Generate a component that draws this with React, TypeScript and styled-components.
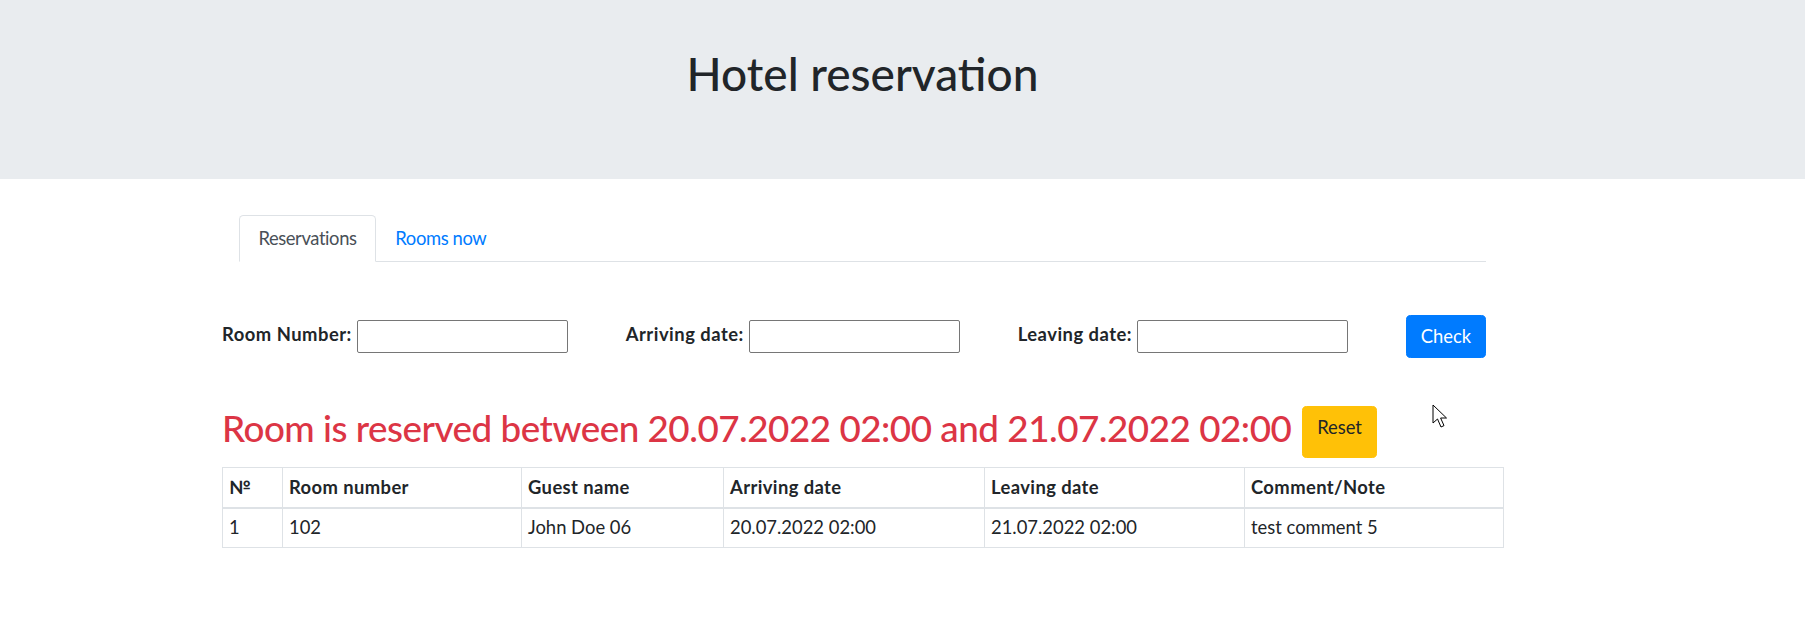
import React from "react";
import styled, { createGlobalStyle } from "styled-components";

const GlobalStyle = createGlobalStyle`
  html, body {
    margin: 0;
    padding: 0;
    background: #ffffff;
  }
  body {
    font-family: Lato, "Open Sans", "Noto Sans", sans-serif;
    font-size: 18.4px;
    line-height: 1.5;
    color: #212529;
  }
  *, *::before, *::after {
    box-sizing: border-box;
  }
`;

const Page = styled.div`
  position: relative;
  min-height: 624px;
`;

const Jumbotron = styled.header`
  background: #e9ecef;
  height: 179px;
  padding-top: 45.5px;
`;

const Container = styled.div`
  width: 1281px;
  margin-left: 222px;
`;

const Title = styled.h1`
  margin: 0;
  text-align: center;
  font-size: 46px;
  font-weight: 500;
  line-height: 55.2px;
`;

const Nav = styled.nav`
  display: flex;
  margin: 36px 17px 0;
  border-bottom: 1px solid #dee2e6;
`;

const TabLink = styled.a<{ $active?: boolean }>`
  display: block;
  margin-bottom: -1px;
  padding: 9px 18.4px;
  line-height: 27px;
  letter-spacing: -0.4px;
  border: 1px solid ${(p) => (p.$active ? "#dee2e6" : "transparent")};
  border-bottom-color: ${(p) => (p.$active ? "#ffffff" : "transparent")};
  border-top-left-radius: 4.6px;
  border-top-right-radius: 4.6px;
  background: ${(p) => (p.$active ? "#ffffff" : "transparent")};
  color: ${(p) => (p.$active ? "#495057" : "#007bff")};
  text-decoration: none;
  cursor: pointer;
`;

const FormRow = styled.form`
  display: flex;
  justify-content: space-between;
  align-items: center;
  margin: 53px 17px 0 0;
`;

const Field = styled.div`
  display: flex;
  align-items: center;
`;

const Label = styled.label`
  font-weight: 700;
  letter-spacing: 0.5px;
  margin-right: 5px;
  padding-bottom: 4px;
  line-height: 27.6px;
`;

const TextInput = styled.input`
  width: 211px;
  height: 33px;
  padding: 1px 3px;
  border: 1px solid #767676;
  border-radius: 2px;
  font-family: inherit;
  font-size: 15.3px;
  background: #ffffff;
`;

const Button = styled.button<{ $variant: "primary" | "warning" }>`
  display: inline-flex;
  align-items: flex-start;
  padding: 6.9px 13.8px;
  font-family: inherit;
  font-size: 18.4px;
  line-height: 27.6px;
  font-weight: 400;
  border-radius: 4.6px;
  cursor: pointer;
  border: 1px solid ${(p) => (p.$variant === "primary" ? "#007bff" : "#ffc107")};
  background: ${(p) => (p.$variant === "primary" ? "#007bff" : "#ffc107")};
  color: ${(p) => (p.$variant === "primary" ? "#ffffff" : "#212529")};
`;

const ResetButton = styled(Button)`
  height: 52px;
  margin-left: 11px;
`;

const HeadingRow = styled.div`
  display: flex;
  align-items: flex-start;
  margin-top: 48px;
`;

const Alert = styled.h2`
  margin: 0;
  font-size: 36.8px;
  font-weight: 500;
  line-height: 44.16px;
  letter-spacing: -0.5px;
  color: #dc3545;
`;

const Table = styled.table`
  width: 100%;
  margin-top: 9px;
  border-collapse: collapse;
  table-layout: fixed;
  color: #212529;
`;

const HeadCell = styled.th`
  padding: 5.5px 6px;
  line-height: 27.6px;
  text-align: left;
  font-weight: 700;
  letter-spacing: 0.4px;
  border: 1px solid #dee2e6;
  border-bottom: 2px solid #dee2e6;
`;

const Cell = styled.td`
  padding: 5px 6px;
  line-height: 27.6px;
  border: 1px solid #dee2e6;
`;

const Cursor = styled.svg`
  position: absolute;
  left: 1432px;
  top: 404px;
  pointer-events: none;
`;

const columns = [
  { title: "№", width: 60 },
  { title: "Room number", width: 239 },
  { title: "Guest name", width: 202 },
  { title: "Arriving date", width: 261 },
  { title: "Leaving date", width: 260 },
  { title: "Comment/Note", width: 259 },
];

const rows = [
  ["1", "102", "John Doe 06", "20.07.2022 02:00", "21.07.2022 02:00", "test comment 5"],
];

export default function App() {
  return (
    <Page>
      <GlobalStyle />
      <Jumbotron>
        <Container>
          <Title>Hotel reservation</Title>
        </Container>
      </Jumbotron>
      <Container>
        <Nav>
          <TabLink $active>Reservations</TabLink>
          <TabLink>Rooms now</TabLink>
        </Nav>

        <FormRow onSubmit={(e) => e.preventDefault()}>
          <Field>
            <Label htmlFor="room">Room Number:</Label>
            <TextInput id="room" type="text" />
          </Field>
          <Field>
            <Label htmlFor="arrive">Arriving date:</Label>
            <TextInput id="arrive" type="text" />
          </Field>
          <Field>
            <Label htmlFor="leave">Leaving date:</Label>
            <TextInput id="leave" type="text" />
          </Field>
          <Button $variant="primary" type="submit">Check</Button>
        </FormRow>

        <HeadingRow>
          <Alert>Room is reserved between 20.07.2022 02:00 and 21.07.2022 02:00</Alert>
          <ResetButton $variant="warning" type="button">Reset</ResetButton>
        </HeadingRow>

        <Table>
          <colgroup>
            {columns.map((c) => (
              <col key={c.title} style={{ width: c.width }} />
            ))}
          </colgroup>
          <thead>
            <tr>
              {columns.map((c) => (
                <HeadCell key={c.title}>{c.title}</HeadCell>
              ))}
            </tr>
          </thead>
          <tbody>
            {rows.map((r) => (
              <tr key={r[0]}>
                {r.map((v, i) => (
                  <Cell key={i}>{v}</Cell>
                ))}
              </tr>
            ))}
          </tbody>
        </Table>
      </Container>

      <Cursor width="17" height="26" viewBox="0 0 17 26">
        <path
          d="M1 1 L1 19 L5.5 15 L9 23 L12 21.6 L8.6 14 L14.5 14 Z"
          fill="#ffffff"
          stroke="#000000"
          strokeWidth="1"
          strokeLinejoin="miter"
        />
      </Cursor>
    </Page>
  );
}
